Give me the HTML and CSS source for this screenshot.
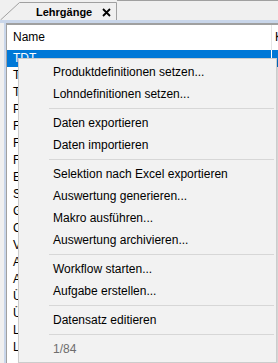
FILE: index.html
```html
<!DOCTYPE html>
<html lang="de">
<head>
<meta charset="utf-8">
<link rel="stylesheet" href="styles.css">
</head>
<body>
<div class="tabstrip">
  <div class="tab">
    <svg class="tab-shape" width="118" height="20" viewBox="0 0 118 20"><path d="M0.5 20 L19.5 2.5 H116.5 V20" fill="#f0f0f0" stroke="#a0a0a0" stroke-width="1"/></svg>
    <span class="tab-label">Lehrgänge</span>
    <svg class="tab-close" width="9" height="9" viewBox="0 0 9 9"><path d="M1 1 L8 8 M8 1 L1 8" stroke="#000" stroke-width="1.8" fill="none"/></svg>
  </div>
  <div class="strip-fill"></div>
</div>
<div class="tabline"></div>
<div class="frame">
  <div class="list">
    <div class="row head"><div class="c1">Name</div><div class="c2">Kurs</div></div>
    <div class="row sel"><div class="c1">TDT</div><div class="c2">&nbsp;</div></div>
    <div class="row"><div class="c1">TBL Training</div><div class="c2"></div></div>
    <div class="row"><div class="c1">Testkurs</div><div class="c2"></div></div>
    <div class="row"><div class="c1">Produktion</div><div class="c2"></div></div>
    <div class="row"><div class="c1">Fertigung A</div><div class="c2"></div></div>
    <div class="row"><div class="c1">Fertigung B</div><div class="c2"></div></div>
    <div class="row"><div class="c1">Fräsen</div><div class="c2"></div></div>
    <div class="row"><div class="c1">Elektrotechnik</div><div class="c2"></div></div>
    <div class="row"><div class="c1">Schweißen</div><div class="c2"></div></div>
    <div class="row"><div class="c1">Grundlagen</div><div class="c2"></div></div>
    <div class="row"><div class="c1">CNC-Technik</div><div class="c2"></div></div>
    <div class="row"><div class="c1">Verpackung</div><div class="c2"></div></div>
    <div class="row"><div class="c1">Arbeitssicherheit</div><div class="c2"></div></div>
    <div class="row"><div class="c1">Allgemein</div><div class="c2"></div></div>
    <div class="row"><div class="c1">Übung 1</div><div class="c2"></div></div>
    <div class="row"><div class="c1">Übung 2</div><div class="c2"></div></div>
    <div class="row"><div class="c1">Lager</div><div class="c2"></div></div>
    <div class="row"><div class="c1">Logistik</div><div class="c2"></div></div>
  </div>
</div>
<div class="menu">
  <div class="item">Produktdefinitionen setzen...</div>
  <div class="item">Lohndefinitionen setzen...</div>
  <div class="sep"></div>
  <div class="item">Daten exportieren</div>
  <div class="item">Daten importieren</div>
  <div class="sep"></div>
  <div class="item">Selektion nach Excel exportieren</div>
  <div class="item">Auswertung generieren...</div>
  <div class="item">Makro ausführen...</div>
  <div class="item">Auswertung archivieren...</div>
  <div class="sep"></div>
  <div class="item">Workflow starten...</div>
  <div class="item">Aufgabe erstellen...</div>
  <div class="sep"></div>
  <div class="item">Datensatz editieren</div>
  <div class="sep"></div>
  <div class="item disabled">1/84</div>
</div>
</body>
</html>
```
FILE: styles.css
```css
html, body {
  margin: 0;
  padding: 0;
}
body {
  width: 278px;
  height: 363px;
  overflow: hidden;
  background: #f0f0f0;
  font-family: "Liberation Sans", Arial, sans-serif;
  font-size: 12px;
  color: #000;
  position: relative;
}
.tabstrip {
  display: flex;
  height: 20px;
}
.tab {
  position: relative;
  width: 117px;
  height: 20px;
  display: flex;
  align-items: center;
  flex: none;
}
.tab-shape {
  position: absolute;
  left: 0;
  top: 0;
}
.tab-label {
  position: relative;
  margin-left: 36px;
  margin-top: 3px;
  font-weight: bold;
  font-size: 11px;
}
.tab-close {
  position: relative;
  margin-left: 10px;
  margin-top: 4px;
}
.strip-fill {
  flex: 1;
  border-top: 1px solid #a0a0a0;
}
.tabline {
  height: 3px;
  background: #c9d6ea;
}
.frame {
  margin-left: 4px;
  border-left: 2px solid #c9d6ea;
}
.list {
  background: #fff;
  border-top: 2px solid #a0a0a0;
  border-left: 1px solid #a0a0a0;
  height: 340px;
  overflow: hidden;
}
.row {
  display: flex;
  height: 17px;
  line-height: 17px;
  white-space: nowrap;
}
.row.head {
  height: 25px;
  line-height: 25px;
}
.c1 {
  width: 258px;
  padding-left: 6px;
  border-right: 1px solid #fff;
  overflow: hidden;
}
.head .c1 {
  border-right-color: #e5e5e5;
}
.c2 {
  padding-left: 3px;
  flex: 1;
  overflow: hidden;
}
.row.sel {
  color: #fff;
}
.row.sel .c1, .row.sel .c2 {
  background: #0078d7;
}
.menu {
  position: absolute;
  left: 18px;
  top: 58px;
  width: 257px;
  background: #f2f2f2;
  border: 1px solid #cccccc;
  padding: 2px 0;
  box-shadow: 2px 2px 3px rgba(0,0,0,0.2);
}
.item {
  height: 22px;
  line-height: 22px;
  padding-left: 34px;
  white-space: nowrap;
}
.item.disabled {
  color: #6d6d6d;
}
.sep {
  height: 7px;
  display: flex;
  align-items: center;
  margin-left: 30px;
  margin-right: 2px;
}
.sep::before {
  content: "";
  flex: 1;
  height: 1px;
  background: #d7d7d7;
}
```
